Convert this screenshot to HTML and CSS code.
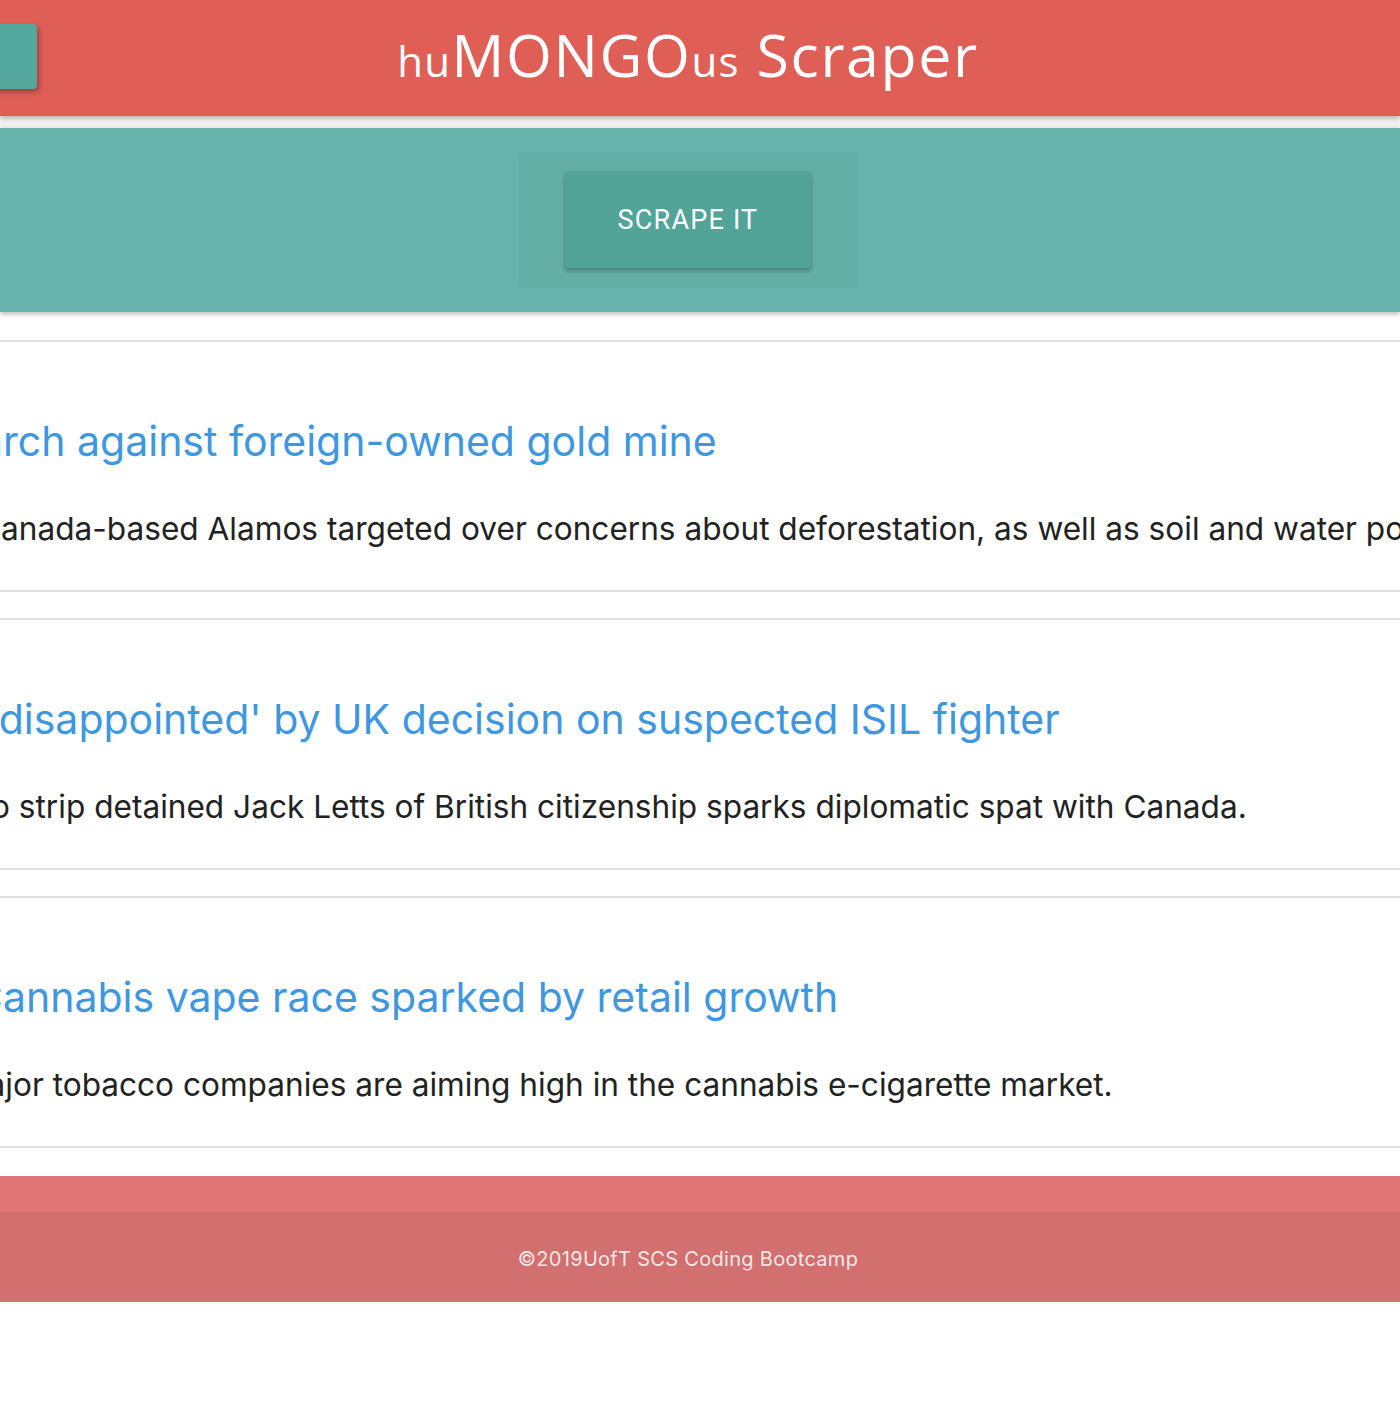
FILE: index.html
```html
<!DOCTYPE html>
<html lang="en">
<head>
<meta charset="utf-8">
<title>huMONGOus Scraper</title>
<link rel="stylesheet" href="styles.css">
</head>
<body>
<header class="topbar">
  <div class="topbar-left"><button class="side-btn" aria-label="Menu"></button></div>
  <h1 class="brand"><span class="small">hu</span>MONGO<span class="small">us</span> Scraper</h1>
  <div></div>
</header>
<div class="hero-wrap">
  <section class="hero">
    <div class="hero-panel">
      <button class="scrape-btn">SCRAPE IT</button>
    </div>
  </section>
</div>
<main class="articles">
  <article class="card">
    <h2 class="headline in-h1">March against foreign-owned gold mine</h2>
    <p class="summary in-b1">Canada-based Alamos targeted over concerns about deforestation, as well as soil and water pollution.</p>
  </article>
  <article class="card">
    <h2 class="headline in-h2">'disappointed' by UK decision on suspected ISIL fighter</h2>
    <p class="summary in-b2">to strip detained Jack Letts of British citizenship sparks diplomatic spat with Canada.</p>
  </article>
  <article class="card">
    <h2 class="headline in-h3">Cannabis vape race sparked by retail growth</h2>
    <p class="summary in-b3">Major tobacco companies are aiming high in the cannabis e-cigarette market.</p>
  </article>
</main>
<footer class="page-footer">
  <div class="footer-top"></div>
  <div class="footer-copyright">©2019UofT SCS Coding Bootcamp</div>
</footer>
</body>
</html>
```

FILE: styles.css
```css
* { box-sizing: border-box; }
html, body { margin: 0; padding: 0; }
body {
  background: #ffffff;
  font-family: Inter, "Noto Sans", sans-serif;
  overflow-x: hidden;
}

.topbar {
  position: relative;
  z-index: 3;
  height: 116px;
  background: #df5e56;
  box-shadow: 0 2px 5px rgba(0,0,0,0.28);
  display: grid;
  grid-template-columns: 1fr auto 1fr;
  align-items: center;
  padding-right: 24px;
}
.topbar-left { display: flex; align-items: center; height: 100%; }
.side-btn {
  width: 60px;
  height: 65px;
  margin-left: -23px;
  margin-top: -3px;
  border: 0;
  border-radius: 4px;
  background: #55a89e;
  box-shadow: 2px 3px 5px rgba(0,0,0,0.3);
}
.brand {
  margin: -8px 0 0;
  font-family: "Open Sans", Lato, sans-serif;
  font-weight: 400;
  color: #fff;
  font-size: 59px;
  letter-spacing: 1.6px;
  line-height: 1;
  white-space: nowrap;
}
.brand .small { font-size: 42px; letter-spacing: 1.2px; }

.hero-wrap {
  background: #f2f2f2;
  padding-top: 12px;
  position: relative;
  z-index: 2;
}
.hero {
  height: 184px;
  background: #68b3ab;
  box-shadow: 0 2px 5px rgba(0,0,0,0.28);
  display: flex;
  justify-content: center;
  align-items: center;
  padding-right: 24px;
}
.hero-panel {
  width: 339px;
  height: 136px;
  background: #63afa6;
  border-radius: 4px;
  display: flex;
  justify-content: center;
  padding-top: 19px;
}
.scrape-btn {
  width: 246px;
  height: 97px;
  border: 0;
  border-radius: 3px;
  background: #52a398;
  color: #fff;
  font-family: Roboto, sans-serif;
  font-size: 27px;
  letter-spacing: 1.2px;
  padding-top: 2px;
  box-shadow: 0 3px 4px rgba(0,0,0,0.25);
}

.articles {
  padding-top: 28px;
  display: flex;
  flex-direction: column;
  gap: 26px;
}
.card {
  height: 252px;
  border-top: 2px solid #e0e0e0;
  border-bottom: 2px solid #e0e0e0;
  padding-top: 72px;
  white-space: nowrap;
}
.headline {
  margin: 0;
  font-weight: 400;
  font-size: 41px;
  line-height: 54px;
  color: #3e97df;
}
.summary {
  margin: 41px 0 0;
  font-size: 31.6px;
  line-height: 40px;
  color: #222;
}
.in-h1 { text-indent: -57px; }
.in-b1 { text-indent: -22px; }
.in-h2 { text-indent: -13px; }
.in-b2 { text-indent: -19px; }
.in-h3 { text-indent: -27px; }
.in-b3 { text-indent: -41px; }

.page-footer { margin-top: 28px; }
.footer-top { height: 36px; background: #e07575; }
.footer-copyright {
  height: 90px;
  background: #d26f6f;
  color: rgba(255,255,255,0.85);
  display: flex;
  align-items: center;
  justify-content: center;
  padding-right: 24px;
  padding-top: 4px;
  font-size: 20px;
  letter-spacing: 0.3px;
}
```
